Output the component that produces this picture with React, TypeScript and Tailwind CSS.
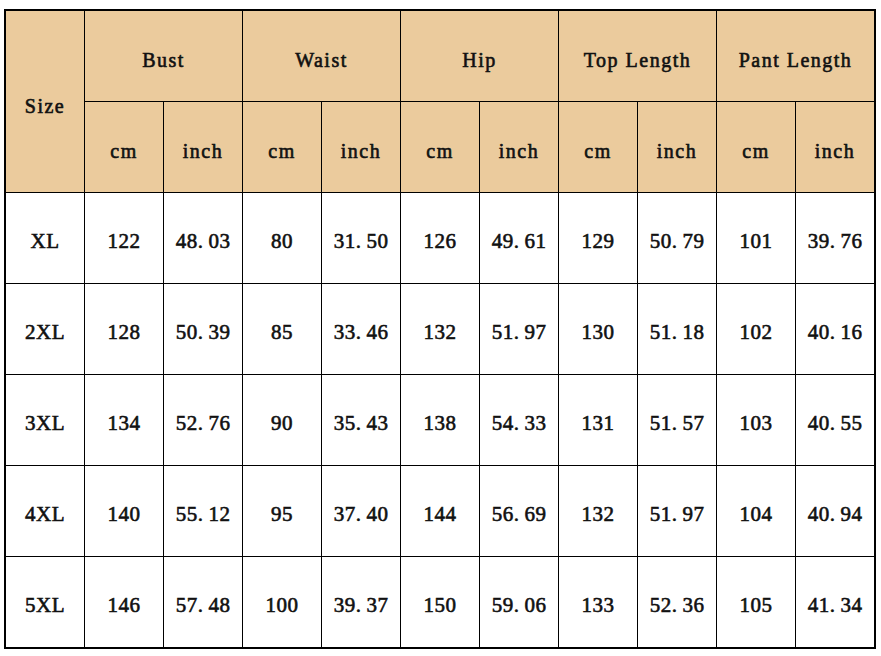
const GROUPS = ["Bust", "Waist", "Hip", "Top Length", "Pant Length"];

const ROWS: string[][] = [
  ["XL", "122", "48.03", "80", "31.50", "126", "49.61", "129", "50.79", "101", "39.76"],
  ["2XL", "128", "50.39", "85", "33.46", "132", "51.97", "130", "51.18", "102", "40.16"],
  ["3XL", "134", "52.76", "90", "35.43", "138", "54.33", "131", "51.57", "103", "40.55"],
  ["4XL", "140", "55.12", "95", "37.40", "144", "56.69", "132", "51.97", "104", "40.94"],
  ["5XL", "146", "57.48", "100", "39.37", "150", "59.06", "133", "52.36", "105", "41.34"],
];

const head =
  "bg-[#ebcb9d] flex items-center justify-center pt-2 text-[20px] tracking-[1.5px]";
const cell =
  "bg-white flex items-center justify-center pt-2 text-[21px] tracking-[0.5px]";

// the source uses full-width-ish periods, so pad after the dot
function Num({ v }: { v: string }) {
  const [a, b] = v.split(".");
  if (b === undefined) return <>{v}</>;
  return (
    <>
      {a}
      <span className="mr-[5px]">.</span>
      {b}
    </>
  );
}

export default function App() {
  return (
    <div className="min-h-screen w-[881px] bg-white pl-1 pt-[9px] font-['Liberation_Serif',serif] font-normal text-[#111] [-webkit-text-stroke:0.6px_#111]">
      <div className="grid w-max grid-cols-[repeat(11,78px)] grid-rows-[repeat(7,90px)] gap-px border-2 border-black bg-black">
        <div className={`${head} row-span-2`}>Size</div>
        {GROUPS.map((g) => (
          <div key={g} className={`${head} col-span-2`}>
            {g}
          </div>
        ))}
        {GROUPS.map((g) => [
          <div key={g + "-cm"} className={head}>cm</div>,
          <div key={g + "-in"} className={head}>inch</div>,
        ])}
        {ROWS.map((row) =>
          row.map((v, i) => (
            <div key={row[0] + i} className={cell}>
              <Num v={v} />
            </div>
          ))
        )}
      </div>
    </div>
  );
}
